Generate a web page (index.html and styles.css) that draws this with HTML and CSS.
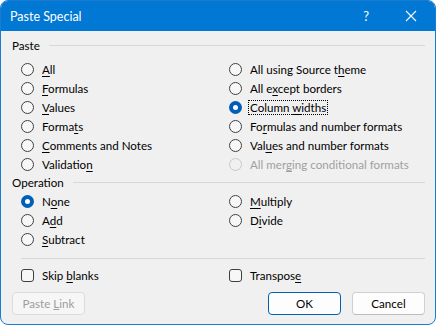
FILE: index.html
```html
<!DOCTYPE html>
<html>
<head>
    <title>Paste Special</title>
    <link rel="stylesheet" href="styles.css">
</head>
<body>
    <div class="window">
        <div class="titlebar">
            <span class="title">Paste Special</span>
            <span class="help">?</span>
            <svg class="close" width="12" height="12" viewBox="0 0 12 12"><path d="M1 1L11 11M11 1L1 11" stroke="#fff" stroke-width="1.1"/></svg>
        </div>
        <div class="content">
            <div class="group-head"><span>Paste</span><div class="rule"></div></div>
            <div class="options paste-opts">
                <label class="opt"><span class="radio"></span><span><u>A</u>ll</span></label>
                <label class="opt"><span class="radio"></span><span>All using Source t<u>h</u>eme</span></label>
                <label class="opt"><span class="radio"></span><span><u>F</u>ormulas</span></label>
                <label class="opt"><span class="radio"></span><span>All e<u>x</u>cept borders</span></label>
                <label class="opt"><span class="radio"></span><span><u>V</u>alues</span></label>
                <label class="opt"><span class="radio checked"></span><span class="focus">Column <u>w</u>idths</span></label>
                <label class="opt"><span class="radio"></span><span>Forma<u>t</u>s</span></label>
                <label class="opt"><span class="radio"></span><span>Fo<u>r</u>mulas and number formats</span></label>
                <label class="opt"><span class="radio"></span><span><u>C</u>omments and Notes</span></label>
                <label class="opt"><span class="radio"></span><span>Val<u>u</u>es and number formats</span></label>
                <label class="opt"><span class="radio"></span><span>Validatio<u>n</u></span></label>
                <label class="opt disabled"><span class="radio"></span><span>All mer<u>g</u>ing conditional formats</span></label>
            </div>
            <div class="group-head"><span>Operation</span><div class="rule"></div></div>
            <div class="options op-opts">
                <label class="opt"><span class="radio checked"></span><span>N<u>o</u>ne</span></label>
                <label class="opt"><span class="radio"></span><span><u>M</u>ultiply</span></label>
                <label class="opt"><span class="radio"></span><span>A<u>d</u>d</span></label>
                <label class="opt"><span class="radio"></span><span>D<u>i</u>vide</span></label>
                <label class="opt"><span class="radio"></span><span><u>S</u>ubtract</span></label>
            </div>
            <div class="divider"></div>
            <div class="options checks">
                <label class="opt"><span class="check"></span><span>Skip <u>b</u>lanks</span></label>
                <label class="opt"><span class="check"></span><span>Transpos<u>e</u></span></label>
            </div>
            <div class="buttons">
                <button class="btn" disabled>Paste <u>L</u>ink</button>
                <div class="spacer"></div>
                <button class="btn default">OK</button>
                <button class="btn">Cancel</button>
            </div>
        </div>
    </div>
</body>
</html>
```

FILE: styles.css
```css
body {
    margin: 0;
    background: #fff;
    font-family: Lato, "Noto Sans", sans-serif;
    font-size: 11.6px;
    color: #000;
}
.window {
    width: 434px;
    height: 323px;
    border: 1px solid #1a7bd0;
    border-radius: 8px;
    overflow: hidden;
    background: #f0f0f0;
}
.titlebar {
    height: 30px;
    background: #0078d4;
    color: #fff;
    display: flex;
    align-items: center;
    padding-left: 9px;
}
.title {
    font-size: 12.5px;
    flex: 1;
}
.help {
    font-size: 13px;
    margin-right: 36px;
}
.close {
    margin-right: 18px;
}
.content {
    padding: 6px 10px 0 11px;
}
.group-head {
    display: flex;
    align-items: center;
    height: 16px;
    gap: 9px;
}
.group-head .rule {
    flex: 1;
    height: 1px;
    background: #d8d8d8;
}
.options {
    display: grid;
    grid-template-columns: 208px 1fr;
    padding-left: 9px;
}
.paste-opts {
    margin-top: 7px;
}
.op-opts {
    margin-top: 2px;
}
.opt {
    display: flex;
    align-items: center;
    height: 19px;
    gap: 8px;
    white-space: nowrap;
}
.opt u {
    text-decoration-thickness: 1px;
    text-underline-offset: 2px;
}
.radio {
    width: 11px;
    height: 11px;
    border: 1px solid #404040;
    border-radius: 50%;
    background: #f7f7f7;
    flex: none;
}
.radio.checked {
    width: 5px;
    height: 5px;
    border: 4px solid #005fb8;
    background: #fff;
}
.disabled {
    color: #a0a0a0;
}
.disabled .radio {
    border-color: #c8c8c8;
    background: #f0f0f0;
}
.focus {
    outline: 1px dotted #000;
    outline-offset: 0;
    padding: 0 1px;
    margin-left: -1px;
}
.divider {
    height: 1px;
    background: #d8d8d8;
    margin: 9px 0 0 9px;
}
.checks {
    margin-top: 7px;
}
.check {
    width: 11px;
    height: 11px;
    border: 1px solid #404040;
    border-radius: 3px;
    background: #f7f7f7;
    flex: none;
}
.buttons {
    display: flex;
    align-items: center;
    gap: 11px;
    margin-top: 7px;
}
.spacer {
    flex: 1;
}
.btn {
    width: 73px;
    height: 23px;
    font-family: inherit;
    font-size: 11.6px;
    color: #000;
    background: #fdfdfd;
    border: 1px solid #d0d0d0;
    border-bottom-color: #bcbcbc;
    border-radius: 4px;
    padding: 0;
}
.btn.default {
    border: 1px solid #005fb8;
}
.btn:disabled {
    color: #9d9d9d;
    background: #f6f6f6;
    border-color: #dcdcdc;
}
```
